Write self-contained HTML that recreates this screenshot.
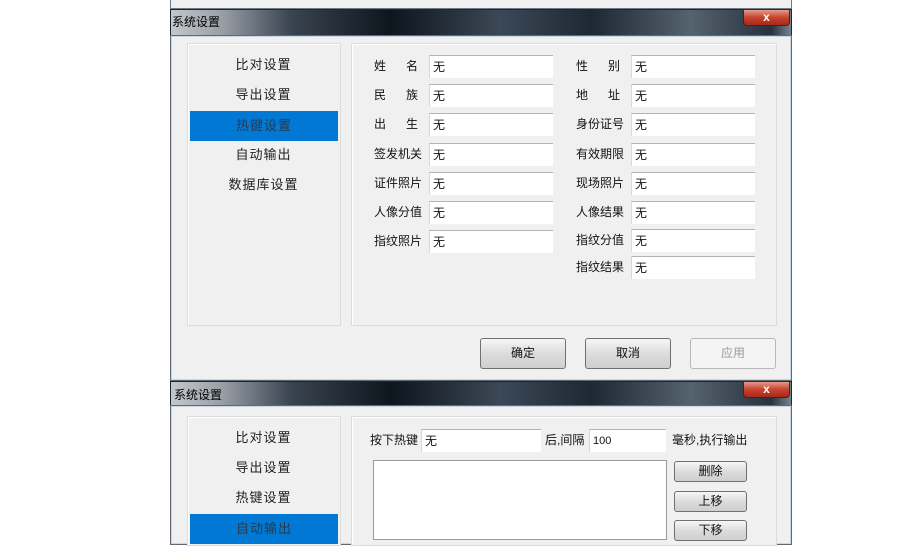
<!DOCTYPE html>
<html><head><meta charset="utf-8"><style>
*{margin:0;padding:0;box-sizing:border-box}
body{width:900px;height:533px;background:#fff;position:relative;overflow:hidden;font-family:"Liberation Sans","Noto Sans CJK SC",sans-serif;font-size:13px;color:#111}
.a{position:absolute}
.title{background:linear-gradient(90deg,#c4c8cc 0px,#9aa0a7 50px,#3a4450 120px,#0e151d 220px,#3b4856 330px,#1d2833 420px,#55626f 520px,#27323d 600px,#7f8c98 622px);border:1px solid #1c2530}
.ttext{color:#000;font-size:12px}
.close{background:linear-gradient(#e59a8a,#c7432c 50%,#a8281a);border:1px solid #5a1a10;border-radius:0 0 4px 4px;color:#fff;font-weight:bold;font-size:12px;text-align:center;line-height:15px}
.body{background:#f0f0f0;border:1px solid #5f6a75;box-shadow:inset 0 0 0 1px #c9d6e3}
.panel{background:#f0f0f0;border:1px solid #dcdcdc;box-shadow:1px 1px 0 #fff inset}
.nav{width:151px;text-align:center;font-size:13px;letter-spacing:1px;height:30px;line-height:30px;color:#222}
.sel{background:#0078d4;color:#2a3a4a}
.lbl{font-size:12px;height:22px;line-height:22px;color:#111}
.in{background:#fff;border-top:1px solid #b4b4b4;border-left:1px solid #d8d8d8;height:23px;width:124px;line-height:22px;padding-left:3px;font-size:12px}
.btn{border:1px solid #707070;border-radius:3px;background:linear-gradient(#f6f6f6,#dcdcdc 50%,#cfcfcf);text-align:center;font-size:12px;line-height:28px}
</style></head><body>
<div class="a" style="left:170px;top:0;width:622px;height:9px;background:#f0f0f0;border:1px solid #6d7b89;border-top:none"></div>

<div class="a title" style="left:170px;top:9px;width:622px;height:27px"></div>
<div class="a ttext" style="left:172px;top:13px">系统设置</div>
<div class="a close" style="left:743px;top:9px;width:47px;height:17px">x</div>
<div class="a body" style="left:170px;top:35px;width:622px;height:346px"></div>
<div class="a panel" style="left:187px;top:43px;width:154px;height:283px"></div>
<div class="a panel" style="left:351px;top:43px;width:426px;height:283px"></div>
<div class="a nav" style="left:188px;top:50px">比对设置</div>
<div class="a nav" style="left:188px;top:80px">导出设置</div>
<div class="a nav sel" style="left:190px;top:111px;width:148px">热键设置</div>
<div class="a nav" style="left:188px;top:140px">自动输出</div>
<div class="a nav" style="left:188px;top:170px">数据库设置</div>

<div class="a lbl" style="left:374px;top:55px">姓&nbsp;&nbsp;&nbsp;&nbsp;&nbsp;&nbsp;名</div><div class="a in" style="left:429px;top:55px">无</div>
<div class="a lbl" style="left:374px;top:84px">民&nbsp;&nbsp;&nbsp;&nbsp;&nbsp;&nbsp;族</div><div class="a in" style="left:429px;top:84px">无</div>
<div class="a lbl" style="left:374px;top:113px">出&nbsp;&nbsp;&nbsp;&nbsp;&nbsp;&nbsp;生</div><div class="a in" style="left:429px;top:113px">无</div>
<div class="a lbl" style="left:374px;top:143px">签发机关</div><div class="a in" style="left:429px;top:143px">无</div>
<div class="a lbl" style="left:374px;top:172px">证件照片</div><div class="a in" style="left:429px;top:172px">无</div>
<div class="a lbl" style="left:374px;top:201px">人像分值</div><div class="a in" style="left:429px;top:201px">无</div>
<div class="a lbl" style="left:374px;top:230px">指纹照片</div><div class="a in" style="left:429px;top:230px">无</div>

<div class="a lbl" style="left:576px;top:55px">性&nbsp;&nbsp;&nbsp;&nbsp;&nbsp;&nbsp;别</div><div class="a in" style="left:631px;top:55px">无</div>
<div class="a lbl" style="left:576px;top:84px">地&nbsp;&nbsp;&nbsp;&nbsp;&nbsp;&nbsp;址</div><div class="a in" style="left:631px;top:84px">无</div>
<div class="a lbl" style="left:576px;top:113px">身份证号</div><div class="a in" style="left:631px;top:113px">无</div>
<div class="a lbl" style="left:576px;top:143px">有效期限</div><div class="a in" style="left:631px;top:143px">无</div>
<div class="a lbl" style="left:576px;top:172px">现场照片</div><div class="a in" style="left:631px;top:172px">无</div>
<div class="a lbl" style="left:576px;top:201px">人像结果</div><div class="a in" style="left:631px;top:201px">无</div>
<div class="a lbl" style="left:576px;top:229px">指纹分值</div><div class="a in" style="left:631px;top:229px">无</div>
<div class="a lbl" style="left:576px;top:256px">指纹结果</div><div class="a in" style="left:631px;top:256px">无</div>

<div class="a btn" style="left:480px;top:338px;width:86px;height:31px">确定</div>
<div class="a btn" style="left:585px;top:338px;width:86px;height:31px">取消</div>
<div class="a btn" style="left:690px;top:338px;width:86px;height:31px;border-color:#b8b8b8;background:#f4f4f4;color:#9a9a9a">应用</div>

<div class="a title" style="left:170px;top:381px;width:622px;height:25px"></div>
<div class="a ttext" style="left:174px;top:386px">系统设置</div>
<div class="a close" style="left:743px;top:381px;width:47px;height:17px">x</div>
<div class="a body" style="left:170px;top:405px;width:622px;height:140px"></div>
<div class="a panel" style="left:187px;top:416px;width:154px;height:130px"></div>
<div class="a panel" style="left:351px;top:416px;width:426px;height:130px"></div>
<div class="a nav" style="left:188px;top:423px">比对设置</div>
<div class="a nav" style="left:188px;top:453px">导出设置</div>
<div class="a nav" style="left:188px;top:483px">热键设置</div>
<div class="a nav sel" style="left:190px;top:514px;width:148px">自动输出</div>
<div class="a lbl" style="left:370px;top:429px">按下热键</div><div class="a in" style="left:421px;top:429px;width:120px">无</div>
<div class="a lbl" style="left:545px;top:429px">后,间隔</div><div class="a in" style="left:589px;top:429px;width:77px;font-size:11px">100</div>
<div class="a lbl" style="left:672px;top:429px">毫秒,执行输出</div>
<div class="a" style="left:373px;top:460px;width:294px;height:80px;background:#fff;border:1px solid #9a9a9a"></div>
<div class="a btn" style="left:674px;top:461px;width:73px;height:21px;line-height:19px">删除</div>
<div class="a btn" style="left:674px;top:491px;width:73px;height:21px;line-height:19px">上移</div>
<div class="a btn" style="left:674px;top:520px;width:73px;height:21px;line-height:19px">下移</div>
</body></html>
